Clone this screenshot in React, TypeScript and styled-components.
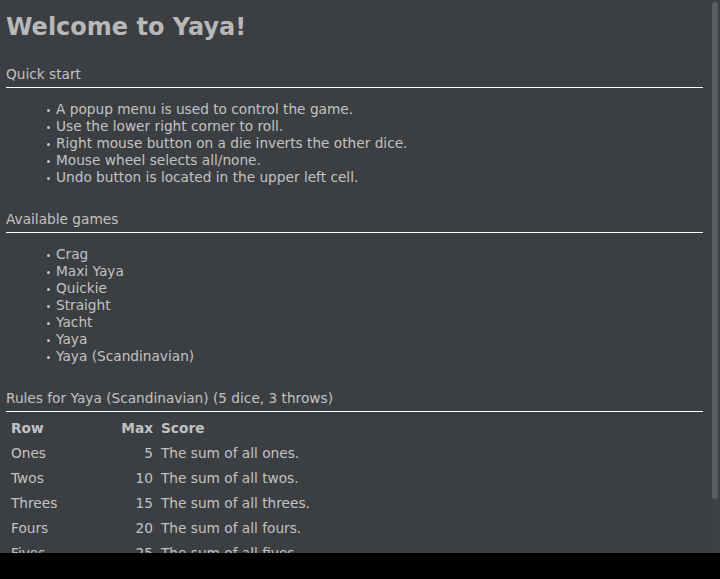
import { createGlobalStyle, styled } from 'styled-components';

const quickStart = [
  'A popup menu is used to control the game.',
  'Use the lower right corner to roll.',
  'Right mouse button on a die inverts the other dice.',
  'Mouse wheel selects all/none.',
  'Undo button is located in the upper left cell.',
];

const games = ['Crag', 'Maxi Yaya', 'Quickie', 'Straight', 'Yacht', 'Yaya', 'Yaya (Scandinavian)'];

const rules = [
  { row: 'Ones', max: 5, score: 'The sum of all ones.' },
  { row: 'Twos', max: 10, score: 'The sum of all twos.' },
  { row: 'Threes', max: 15, score: 'The sum of all threes.' },
  { row: 'Fours', max: 20, score: 'The sum of all fours.' },
  { row: 'Fives', max: 25, score: 'The sum of all fives.' },
  { row: 'Sixes', max: 30, score: 'The sum of all sixes.' },
];

const App = () => {
  return (
    <>
      <GlobalStyle />
      <Frame>
        <Viewport>
          <Content>
            <Title>Welcome to Yaya!</Title>

            <Section>
              <SectionTitle>Quick start</SectionTitle>
              <BulletList>
                {quickStart.map((item) => (
                  <BulletItem key={item}>
                    <Dot />
                    <span>{item}</span>
                  </BulletItem>
                ))}
              </BulletList>
            </Section>

            <Section>
              <SectionTitle>Available games</SectionTitle>
              <BulletList>
                {games.map((game) => (
                  <BulletItem key={game}>
                    <Dot />
                    <span>{game}</span>
                  </BulletItem>
                ))}
              </BulletList>
            </Section>

            <Section>
              <SectionTitle>Rules for Yaya (Scandinavian) (5 dice, 3 throws)</SectionTitle>
              <RulesTable>
                <Cell $head>Row</Cell>
                <Cell $head $right>
                  Max
                </Cell>
                <Cell $head>Score</Cell>
                {rules.map((r) => (
                  <RuleRow key={r.row}>
                    <Cell>{r.row}</Cell>
                    <Cell $right>{r.max}</Cell>
                    <Cell>{r.score}</Cell>
                  </RuleRow>
                ))}
              </RulesTable>
            </Section>
          </Content>
          <ScrollTrack>
            <ScrollThumb />
          </ScrollTrack>
        </Viewport>
        <StatusBar />
      </Frame>
    </>
  );
};

export default App;

const GlobalStyle = createGlobalStyle`
  html, body {
    margin: 0;
    padding: 0;
    background: #000;
    overflow: hidden;
  }
  #root {
    height: 579px;
  }
`;

const Frame = styled.div`
  display: flex;
  flex-direction: column;
  width: 720px;
  height: 579px;
`;

const Viewport = styled.div`
  display: flex;
  height: 553px;
  flex: none;
  background: #3c3f42;
  color: #c2c2c2;
  font-family: 'DejaVu Sans', 'Liberation Sans', sans-serif;
  font-size: 13.7px;
  line-height: 17px;
`;

const Content = styled.div`
  flex: 1;
  min-width: 0;
  overflow: hidden;
  padding: 13px 7px 20px 6px;
`;

const ScrollTrack = styled.div`
  width: 10px;
  flex: none;
  padding: 2px;
  box-sizing: border-box;
  background: #3e4144;
`;

const ScrollThumb = styled.div`
  height: 497px;
  border-radius: 3px;
  background: #5b5e61;
`;

const StatusBar = styled.div`
  flex: 1;
  background: #000;
`;

const Title = styled.h1`
  margin: 0;
  font-size: 24px;
  line-height: 28px;
  font-weight: bold;
  color: #b8b8b8;
`;

const Section = styled.section`
  margin-top: 25px;
`;

const SectionTitle = styled.div`
  padding-bottom: 4px;
  border-bottom: 1px solid #ffffff;
`;

const BulletList = styled.ul`
  list-style: none;
  margin: 13px 0 0 0;
  padding: 0 0 0 41px;
`;

const BulletItem = styled.li`
  display: flex;
  align-items: center;
  gap: 6px;
`;

const Dot = styled.span`
  width: 3px;
  height: 3px;
  margin-top: 2px;
  border-radius: 50%;
  background: #c2c2c2;
  flex: none;
`;

const RulesTable = styled.div`
  display: grid;
  grid-template-columns: 107px 39px 1fr;
  grid-auto-rows: 25px;
  column-gap: 2px;
  margin: 4px 0 0 2px;
`;

const RuleRow = styled.div`
  display: contents;
`;

const Cell = styled.div<{ $head?: boolean; $right?: boolean }>`
  padding: 4px 3px;
  font-weight: ${(p) => (p.$head ? 'bold' : 'normal')};
  text-align: ${(p) => (p.$right ? 'right' : 'left')};
  white-space: nowrap;
`;
